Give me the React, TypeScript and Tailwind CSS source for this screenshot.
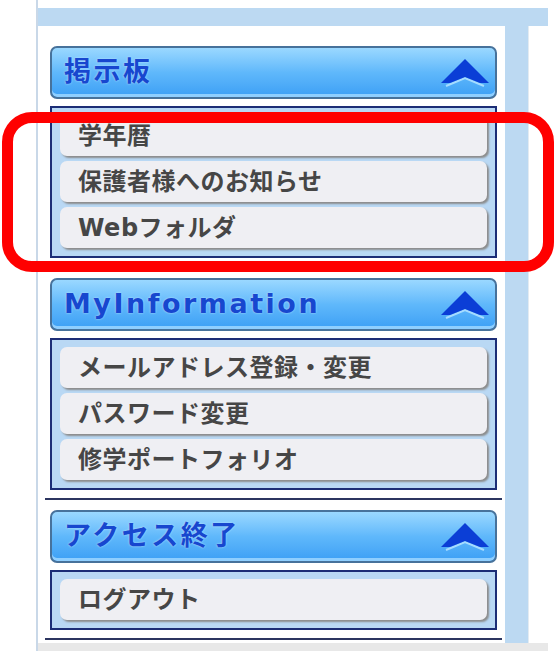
import React from 'react';

const jpFont = "font-['DejaVu_Sans','Noto_Sans_CJK_JP',sans-serif]";

const sections = [
  { title: '掲示板', items: ['学年暦', '保護者様へのお知らせ', 'Webフォルダ'] },
  { title: 'MyInformation', items: ['メールアドレス登録・変更', 'パスワード変更', '修学ポートフォリオ'] },
  { title: 'アクセス終了', items: ['ログアウト'] },
];

const Chevron = () => (
  <svg width="50" height="30" viewBox="0 0 50 30">
    <polyline points="6,28 25,20 44,28" fill="none" stroke="#a6dcff" strokeWidth="2" />
    <polygon points="25,1 49,25 40,25 25,19 10,25 1,25" fill="#0b3ed6" />
  </svg>
);

const MenuHeader = ({ title }: { title: string }) => (
  <div className="h-[53px] rounded-[7px] border-2 border-[#47729b] bg-gradient-to-b from-[#9ad8ff] via-[#5fb8fb] to-[#3c9ff5] shadow-[inset_0_-3px_0_#8fcfff] flex items-center justify-between pl-[12px] pr-[5px]">
    <span className={`${jpFont} text-[27px] font-bold text-[#1747cf] tracking-[2.5px] [text-shadow:0_0_2px_#c4e8ff]`}>
      {title}
    </span>
    <Chevron />
  </div>
);

const MenuItem = ({ label }: { label: string }) => (
  <div className="h-[41px] rounded-[7px] bg-[#efeff3] shadow-[2px_2px_2px_#8c8c8c] flex items-center pl-[18px]">
    <span className={`${jpFont} text-[24px] font-bold text-[#464646] tracking-[0.5px]`}>{label}</span>
  </div>
);

export default function App() {
  return (
    <div className="relative w-[556px] h-[651px] bg-white flex overflow-hidden">
      <div className="w-[36px]" />
      <div className="w-[2px] bg-[#c9d8e8]" />
      <div className="w-[510px] flex flex-col">
        <div className="h-[8px]" />
        <div className="h-[18px] bg-[#bcd9f2]" />
        <div className="flex flex-1">
          <div className="w-[467px] pt-[20px] pl-[12px] pr-[8px]">
            {sections.map((s, i) => (
              <div key={i} className={i === 0 ? '' : 'mt-[10px]'}>
                <MenuHeader title={s.title} />
                <div className="mt-[7px] border-2 border-[#1c2d76] bg-[#b9d8f4] px-[8px] pt-[7px] pb-[8px] flex flex-col gap-[5px]">
                  {s.items.map((it, j) => (
                    <MenuItem key={j} label={it} />
                  ))}
                </div>
                <div className="mt-[8px] -mx-[5px] h-[2px] bg-[#2c3560]" />
              </div>
            ))}
          </div>
          <div className="w-[23px] bg-[#bcd9f2]" />
          <div className="w-[20px] border-l border-[#e3ebf2]" />
        </div>
        <div className="h-[8px] bg-[#e8e8e8]" />
      </div>
      <div className="absolute left-[2px] top-[112px] w-[552px] h-[160px] border-[11px] border-[#ff0000] rounded-[30px]" />
    </div>
  );
}
